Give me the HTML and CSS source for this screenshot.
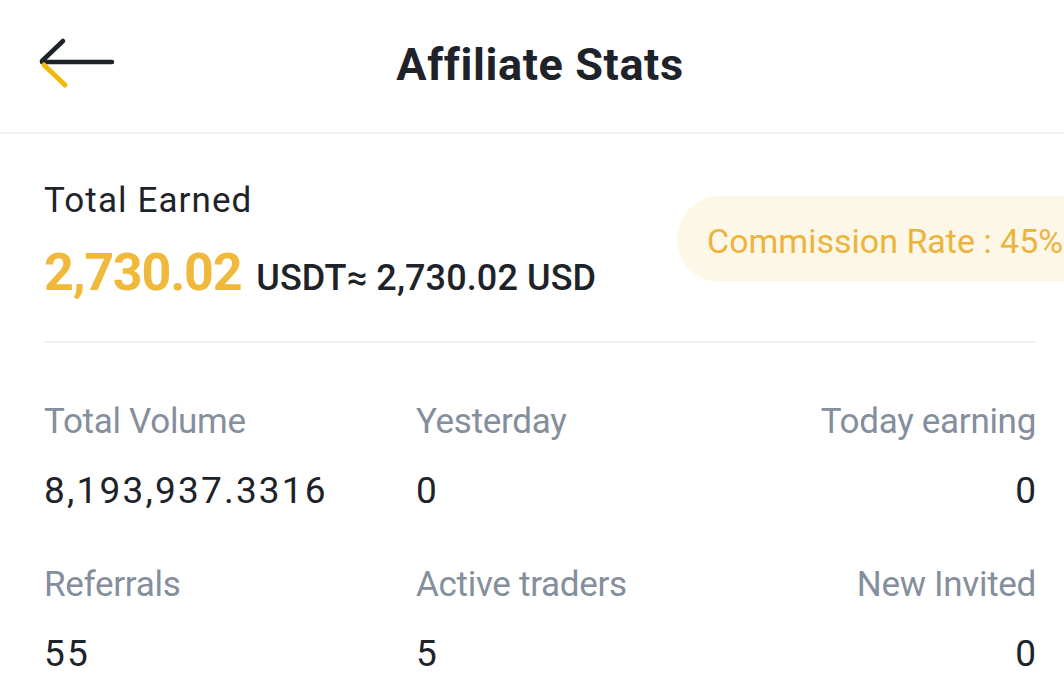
FILE: index.html
```html
<!DOCTYPE html>
<html lang="en">
<head>
<meta charset="utf-8">
<link rel="stylesheet" href="styles.css">
</head>
<body>
<div class="page">
  <header class="topbar">
    <button class="back" aria-label="Back">
      <svg width="80" height="52" viewBox="0 0 80 52">
        <path d="M6 25 H76" stroke="#1e2329" stroke-width="4.5" stroke-linecap="round" fill="none"/>
        <path d="M27 4 L6 24" stroke="#1e2329" stroke-width="4.5" stroke-linecap="round" fill="none"/>
        <path d="M8 28 L29 48" stroke="#f0b90b" stroke-width="5" stroke-linecap="round" fill="none"/>
      </svg>
    </button>
    <h1 class="title">Affiliate Stats</h1>
    <span class="spacer"></span>
  </header>

  <section class="summary">
    <div class="earned">
      <div class="label-dark">Total Earned</div>
      <div class="amount-row">
        <span class="amount">2,730.02</span>
        <span class="amount-unit">USDT≈ 2,730.02 USD</span>
      </div>
    </div>
    <div class="rate-pill">Commission Rate : 45%</div>
  </section>

  <div class="divider"></div>

  <section class="stats">
    <div class="stat">
      <div class="stat-label">Total Volume</div>
      <div class="stat-value">8,193,937.3316</div>
    </div>
    <div class="stat">
      <div class="stat-label">Yesterday</div>
      <div class="stat-value">0</div>
    </div>
    <div class="stat right">
      <div class="stat-label">Today earning</div>
      <div class="stat-value">0</div>
    </div>
    <div class="stat">
      <div class="stat-label">Referrals</div>
      <div class="stat-value">55</div>
    </div>
    <div class="stat">
      <div class="stat-label">Active traders</div>
      <div class="stat-value">5</div>
    </div>
    <div class="stat right">
      <div class="stat-label">New Invited</div>
      <div class="stat-value">0</div>
    </div>
  </section>
</div>
</body>
</html>
```

FILE: styles.css
```css
html, body {
  margin: 0;
  padding: 0;
  background: #ffffff;
  overflow: hidden;
}

body {
  font-family: "Roboto", "Liberation Sans", sans-serif;
  color: #1e2329;
  width: 1064px;
  height: 691px;
}

.page {
  width: 1064px;
  overflow: hidden;
}

.topbar {
  display: grid;
  grid-template-columns: 136px 1fr 120px;
  align-items: center;
  border-bottom: 2px solid #eef0f2;
  box-sizing: border-box;
  height: 134px;
}

.back {
  border: 0;
  background: none;
  padding: 0;
  margin-left: 36px;
  margin-top: -7px;
  width: 80px;
  height: 52px;
  display: flex;
}

.title {
  margin: 0;
  margin-top: -4px;
  text-align: center;
  font-size: 45px;
  font-weight: 700;
  letter-spacing: 0.6px;
  color: #1e2329;
}

.summary {
  display: grid;
  grid-template-columns: 633px max-content;
  align-items: start;
  padding: 0 0 0 44px;
  height: 207px;
}

.earned {
  margin-top: 47px;
}

.label-dark {
  font-size: 35px;
  line-height: 40px;
  letter-spacing: 1.1px;
  color: #1e2329;
}

.amount-row {
  display: flex;
  align-items: baseline;
  gap: 15px;
  margin-top: 21px;
}

.amount {
  font-size: 52px;
  font-weight: 700;
  color: #f0b93b;
  letter-spacing: -1.2px;
}

.amount-unit {
  font-size: 36px;
  font-weight: 500;
  color: #1e2329;
  letter-spacing: 0.1px;
}

.rate-pill {
  margin-top: 62px;
  height: 86px;
  border-radius: 43px;
  background: #fdf7e7;
  color: #ecb43c;
  font-size: 34px;
  line-height: 90px;
  padding: 0 40px 0 30px;
  white-space: nowrap;
  letter-spacing: 0;
}

.divider {
  height: 2px;
  background: #eef0f2;
  margin: 0 28px 0 44px;
}

.stats {
  display: grid;
  grid-template-columns: 372px 1fr 1fr;
  padding: 59px 28px 0 44px;
  row-gap: 52px;
}

.stat-label {
  font-size: 35px;
  line-height: 40px;
  letter-spacing: -0.3px;
  color: #848e9c;
}

.stat-value {
  font-size: 37px;
  line-height: 44px;
  margin-top: 27px;
  letter-spacing: 2.2px;
  color: #1e2329;
}

.stat.right .stat-value {
  margin-right: -2.2px;
}

.stat.right {
  text-align: right;
}
```
